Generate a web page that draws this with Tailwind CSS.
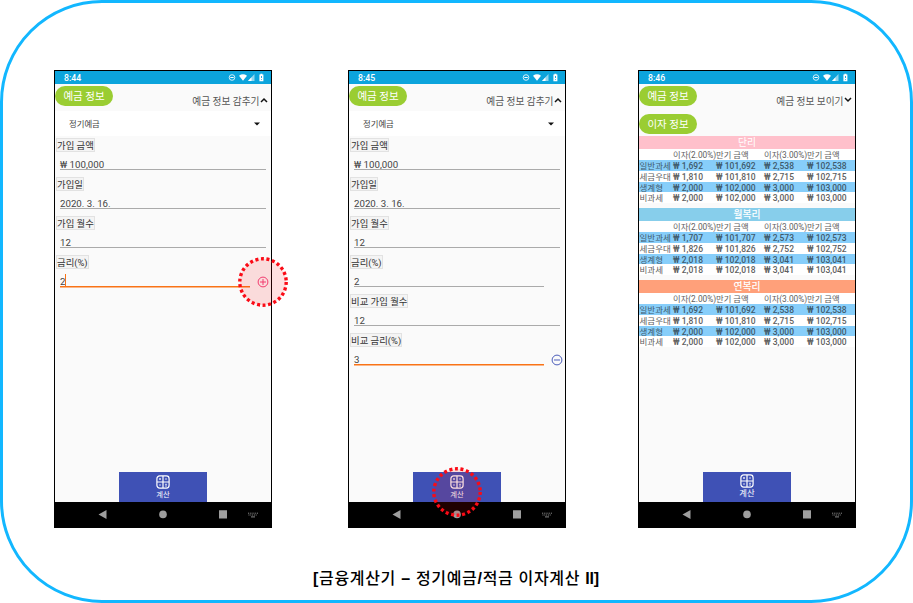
<!DOCTYPE html>
<html lang="ko">
<head>
<meta charset="utf-8">
<title>금융계산기</title>
<script src="https://cdn.jsdelivr.net/npm/@tailwindcss/browser@4"></script>
</head>
<body class="bg-white">
<main class="relative flex h-[603px] w-[913px] flex-col overflow-hidden rounded-[102px] border-3 border-[#12b7ff] bg-white font-['Roboto','Noto_Sans_CJK_KR',sans-serif]">
  <div id="phones" class="flex pt-[67px] pl-[51px]"></div>
  <p id="caption" class="mt-[40px] ml-[310px] h-[22px] w-[300px] whitespace-nowrap font-['Liberation_Sans','Noto_Sans_CJK_KR',sans-serif] text-[16px] leading-[22px] font-medium tracking-[0.68px] text-black"><b>[</b>금융계산기 <b>–</b> 정기예금<b>/</b>적금 이자계산 <b class="tracking-[-0.2px]">II]</b></p>
  <svg class="absolute top-[254px] left-[235px] size-[50px]" viewBox="0 0 50 50"><circle cx="25" cy="25" r="23.2" fill="#f00" fill-opacity=".12" stroke="#fa0b16" stroke-width="3.4" stroke-dasharray="3 2.606"/></svg>
  <svg class="absolute top-[464px] left-[429px] size-[50px]" viewBox="0 0 50 50"><circle cx="25" cy="25" r="23.2" fill="#f00" fill-opacity=".12" stroke="#fa0b16" stroke-width="3.4" stroke-dasharray="3 2.606"/></svg>
</main>
<script>
const statusBar = time => `
  <div class="flex h-[13px] shrink-0 items-center justify-between bg-[#0ca4dc] pr-[7px] pl-[9px] text-white">
    <span class="text-[8.7px] leading-[14px] font-medium">${time}</span>
    <svg class="h-[9px] w-[36px]" viewBox="0 0 36 9" fill="#fff">
      <circle cx="4" cy="4.5" r="2.8" fill="none" stroke="#fff" stroke-width=".8"/><path d="M2.3 4.1h3.4v.8H2.3z"/>
      <path d="M11 2.7Q15 0 19 2.7L15 7.8z"/>
      <path d="M26.5 1v7H20z" opacity=".55"/><path d="M23.5 4.3V8H20z"/>
      <path d="M31.4 1.6h1v-.8h2v.8h1v6.6h-4z"/><path d="M33 3h.9v2H33zM33 6h.9v.8H33z" fill="#0ca4dc"/>
    </svg>
  </div>`;
const pill = text => `<span class="h-[20px] w-[58px] shrink-0 rounded-full bg-[#9acd32] text-center text-[10.5px] leading-[21px] whitespace-nowrap text-white">${text}</span>`;
const toggle = (text, path) => `
  <span class="mt-[6px] flex items-center pr-[3px] text-[9.7px] leading-[19px] whitespace-nowrap text-[#555]">${text}
    <svg class="mt-[-4px] ml-[0.5px] h-[6px] w-[8px]" viewBox="0 0 8 6" fill="none" stroke="#111" stroke-width="1.5"><path d="${path}"/></svg>
  </span>`;
const header = (text, path) => `<div class="flex h-[27px] shrink-0 items-start justify-between pt-[2px]">${pill('예금 정보')}${toggle(text, path)}</div>`;

const badge = {
  plus: `<svg class="mt-[7px] mr-[2px] size-[12px]" viewBox="0 0 12 12" fill="none" stroke="#f0447e"><circle cx="6" cy="6" r="4.9"/><path d="M6 3v6M3 6h6"/></svg>`,
  minus: `<svg class="mt-[6.5px] mr-[2px] size-[12px]" viewBox="0 0 12 12" fill="none" stroke="#4a5cba"><circle cx="6" cy="6" r="4.9"/><path d="M3 6h6"/></svg>`
};
const line = active => active
  ? `<svg class="h-[2px] w-full shrink-0" preserveAspectRatio="none" viewBox="0 0 10 2"><path d="M0 .1h10v1.5H0z" fill="#f97316"/></svg>`
  : `<div class="h-px bg-[#aaaaaa]"></div>`;
const field = f => `
  <div class="flex h-[39px] shrink-0 flex-col items-start pt-[2px] pl-[1px]">
    <label class="h-[14px] shrink-0 border border-[#e2e2e2] bg-[#f4f4f4] text-[9.4px] leading-[14px] whitespace-nowrap text-[#333]">${f.label}</label>
    <div class="flex h-[21px] w-full justify-between pl-[4px]">
      <div class="flex flex-col pt-[5px] ${f.short ? ' w-[190px] ' : ' w-[206px] '}">
        <div class="flex h-[12px] shrink-0 text-[9.7px] leading-[15px] text-[#444]"><span>${f.value}</span>${f.cursor ? '<i class="h-[12px] w-px bg-[#f97316]"></i>' : ''}</div>
        ${line(f.active)}
      </div>
      ${f.icon ? badge[f.icon] : ''}
    </div>
  </div>`;
const form = fields => `
  ${header('예금 정보 감추기', 'M1 5l3-3 3 3')}
  <div class="flex h-[25px] shrink-0 items-center justify-between bg-white pt-px pr-[11px] pl-[14px] text-[8.4px] text-[#444]">
    <span>정기예금</span><svg class="h-[4px] w-[6px]" viewBox="0 0 6 4"><path d="M0 .5h6L3 3.5z" fill="#111"/></svg>
  </div>
  ${fields.map(field).join('')}`;

const row = (cells, style) => `
  <div class="grid grid-cols-[34px_43px_48px_43px_1fr] whitespace-nowrap ${style}">${cells.map((c, i) => i ? `<span>${c}</span>` : `<span class="pl-[0.5px] font-normal">${c}</span>`).join('')}</div>`;
const table = (title, color, rows) => `
  <section class="mb-[5px] text-[8.5px] text-[#606060]">
    <h2 class="h-[13px] ${color} text-center text-[9.8px] leading-[14px] text-white">${title}</h2>
    ${row(['', '이자(2.00%)', '만기 금액', '이자(3.00%)', '만기 금액'], 'h-[11px] bg-white text-[8.3px] leading-[13px]')}
    ${rows.map((r, i) => row([['일반과세', '세금우대', '생계형', '비과세'][i], ...r.map(v => '₩ ' + v)],
      i % 2 ? 'h-[10.75px] bg-white leading-[12px] font-medium' : 'h-[10.75px] bg-[#87cefa] leading-[12px] font-medium text-[#3f5a6c]')).join('')}
  </section>`;
const simple = [['1,692','101,692','2,538','102,538'],['1,810','101,810','2,715','102,715'],['2,000','102,000','3,000','103,000'],['2,000','102,000','3,000','103,000']];
const monthly = [['1,707','101,707','2,573','102,573'],['1,826','101,826','2,752','102,752'],['2,018','102,018','3,041','103,041'],['2,018','102,018','3,041','103,041']];
const result = `
  ${header('예금 정보 보이기', 'M1 1l3 3 3-3')}
  <div class="flex h-[25px] shrink-0 items-start pt-[3px]">${pill('이자 정보')}</div>
  ${table('단리', 'bg-[#ffc0cb]', simple)}
  ${table('월복리', 'bg-[#87ceeb] font-medium', monthly)}
  ${table('연복리', 'bg-[#ffa07a] font-medium', simple)}`;

const footer = big => `
  <div class="mx-auto mt-auto flex h-[30px] w-[88px] shrink-0 flex-col items-center bg-[#3f51b5] text-white ${big ? 'pt-[2px]' : 'pt-[3px]'}">
    <svg class="size-[14px] shrink-0" viewBox="0 0 14 14" fill="none" stroke="#fff" stroke-width="1.2"><rect x=".9" y=".9" width="12.2" height="12.2" rx="2.8"/><path d="M7 1v12M1 7h12"/><path d="M3 4h2M4 3v2M9 4h2M3 10h2M9 9.3h2M9 11h2" stroke-width=".8"/></svg>
    <span class="${big ? 'text-[8.3px]' : 'text-[7.3px]'} leading-[11px]">계산</span>
  </div>
  <div class="h-[25px] shrink-0 bg-black">
    <svg class="h-[25px] w-[216px]" viewBox="0 0 216 25" fill="#9e9e9e"><path d="M51.5 8v9l-8-4.5zM164 8.2h8v8.3h-8z"/><circle cx="108" cy="12.4" r="3.8"/><path d="M193 11.2h10M193.5 13h9" stroke="#888" stroke-width="1" stroke-dasharray="1 .8"/><path d="M196 14.4h4v1h-4z" fill="#888"/></svg>
  </div>`;
const phone = (margin, time, content, big) => `
  <article class="flex h-[458px] w-[218px] shrink-0 flex-col border border-black bg-[#fafafa] ${margin}">${statusBar(time)}${content}${footer(big)}</article>`;

const base = [{label:'가입 금액', value:'₩ 100,000'}, {label:'가입일', value:'2020. 3. 16.'}, {label:'가입 월수', value:'12'}];
document.getElementById('phones').innerHTML =
  phone('', '8:44', form([...base, {label:'금리(%)', value:'2', short:true, active:true, cursor:true, icon:'plus'}]), false) +
  phone('ml-[76px]', '8:45', form([...base, {label:'금리(%)', value:'2', short:true}, {label:'비교 가입 월수', value:'12'}, {label:'비교 금리(%)', value:'3', short:true, active:true, icon:'minus'}]), false) +
  phone('ml-[72px]', '8:46', result, true);
</script>
</body>
</html>
